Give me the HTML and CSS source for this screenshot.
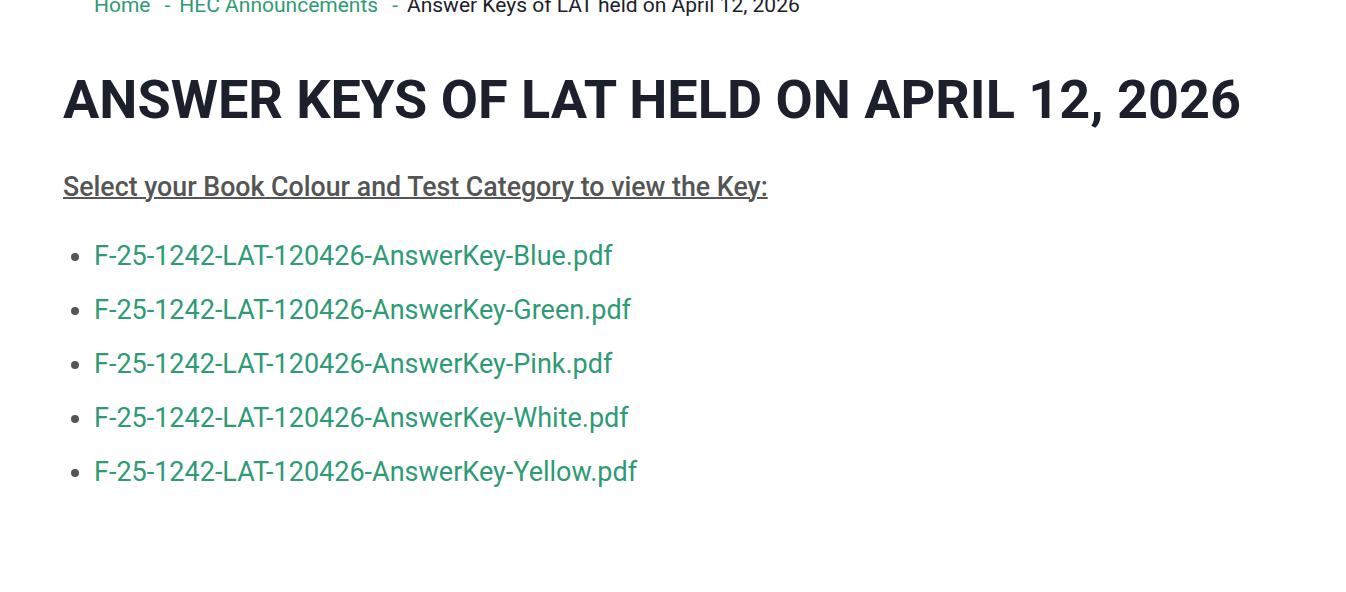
FILE: index.html
```html
<!DOCTYPE html>
<html>
<head>
<meta charset="utf-8">
<link rel="stylesheet" href="styles.css">
</head>
<body>
<div class="page">
  <nav class="crumbs">
    <a href="#">Home</a>
    <span class="sep">-</span>
    <a href="#">HEC Announcements</a>
    <span class="sep">-</span>
    <span class="current">Answer Keys of LAT held on April 12, 2026</span>
  </nav>
  <h1 class="title">ANSWER KEYS OF LAT HELD ON APRIL 12, 2026</h1>
  <p class="lead">Select your Book Colour and Test Category to view the Key:</p>
  <ul class="keys">
    <li><a href="#">F-25-1242-LAT-120426-AnswerKey-Blue.pdf</a></li>
    <li><a href="#">F-25-1242-LAT-120426-AnswerKey-Green.pdf</a></li>
    <li><a href="#">F-25-1242-LAT-120426-AnswerKey-Pink.pdf</a></li>
    <li><a href="#">F-25-1242-LAT-120426-AnswerKey-White.pdf</a></li>
    <li><a href="#">F-25-1242-LAT-120426-AnswerKey-Yellow.pdf</a></li>
  </ul>
</div>
</body>
</html>
```
FILE: styles.css
```css
html, body {
  margin: 0;
  padding: 0;
  background: #ffffff;
}
body {
  font-family: Roboto, "Liberation Sans", sans-serif;
}
.page {
  padding: 0 63px;
  margin-top: -10px;
}
.crumbs {
  display: flex;
  align-items: baseline;
  padding-left: 31px;
  font-size: 21px;
  line-height: 30px;
  color: #1b202c;
}
.crumbs a {
  color: #2e9a76;
  text-decoration: none;
}
.crumbs .sep {
  color: #2e9a76;
  margin: 0 9px 0 14px;
}
.title {
  margin: 48px 0 0;
  font-size: 54px;
  font-weight: 700;
  line-height: 64px;
  color: #1b202c;
}
.lead {
  margin: 38px 0 0;
  font-size: 26.75px;
  font-weight: 500;
  line-height: 34px;
  color: #555555;
  text-decoration: underline;
  text-decoration-thickness: 2px;
}
.keys {
  margin: 35px 0 0;
  padding-left: 31px;
  font-size: 27px;
  line-height: 34px;
  color: #555555;
}
.keys li {
  margin-bottom: 20px;
}
.keys a {
  color: #2e9a76;
  text-decoration: none;
}
```
